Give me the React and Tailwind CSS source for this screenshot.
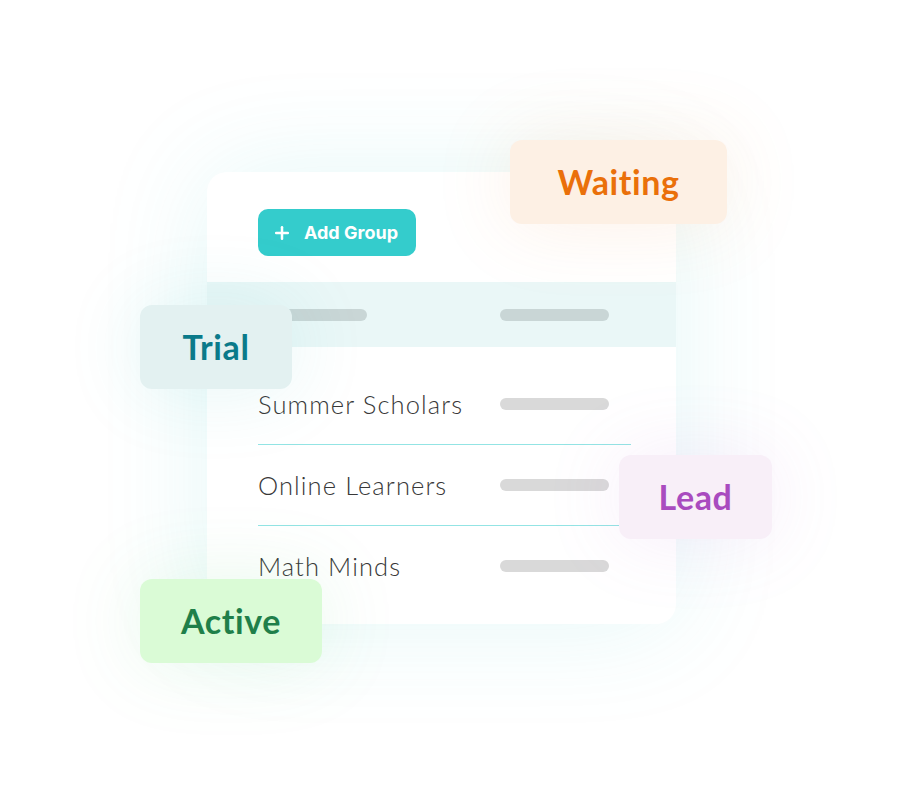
import { Plus } from 'lucide-react';

const rows = [
  ['Summer Scholars', true],
  ['Online Learners', true],
  ['Math Minds', false],
];

const badges = [
  ['Waiting', 'left-[510px] top-[140px] w-[217px] bg-[#fdf0e4] text-[#ea700a] shadow-[0_0_80px_rgba(240,140,60,0.13)]'],
  ['Trial', 'left-[140px] top-[305px] w-[152px] bg-[#e3f1f1] text-[#0a7a8a] shadow-[0_0_80px_rgba(40,180,180,0.12)]'],
  ['Lead', 'left-[619px] top-[455px] w-[153px] bg-[#f8eff8] text-[#a94bbf] shadow-[0_0_80px_rgba(190,110,210,0.12)]'],
  ['Active', 'left-[140px] top-[579px] w-[182px] bg-[#dafbd6] text-[#1f7f4a] shadow-[0_0_80px_rgba(80,200,110,0.13)]'],
];

export default function App() {
  return (
    <div className="relative h-[805px] w-[913px] overflow-hidden bg-white" style={{ fontFamily: 'Lato, "Open Sans", sans-serif' }}>
      <div className="pl-[207px] pt-[172px]">
        <div className="h-[452px] w-[469px] overflow-hidden rounded-[20px] bg-white shadow-[0_0_110px_rgba(52,204,204,0.13)]">
          <div className="h-[110px] pl-[51px] pt-[37px]">
            <button
              className="flex h-[47px] w-[158px] items-center gap-[12px] rounded-[10px] bg-[#34cccc] pl-[14px] text-[18px] font-bold text-white"
              style={{ fontFamily: 'Inter, sans-serif' }}
            >
              <Plus size={20} strokeWidth={3} />
              Add Group
            </button>
          </div>
          <div className="flex h-[65px] items-center bg-[#eaf7f7] pl-[52px]">
            <div className="h-[12px] w-[108px] rounded-full bg-[#c9d6d6]" />
            <div className="ml-[133px] h-[12px] w-[109px] rounded-full bg-[#c9d6d6]" />
          </div>
          <div className="pt-[17px]">
            {rows.map(([name, line]) => (
              <div key={name} className="ml-[51px] w-[373px]">
                <div className="flex h-[80px] items-center">
                  <span className="w-[242px] text-[25.5px] font-light tracking-[1.1px] text-[#383838]">{name}</span>
                  <div className="h-[12px] w-[109px] rounded-full bg-[#d9d9d9]" />
                </div>
                {line && <div className="h-px bg-[#93e4e4]" />}
              </div>
            ))}
          </div>
        </div>
      </div>
      {badges.map(([label, cls]) => (
        <div key={label} className={`absolute flex h-[84px] items-center justify-center rounded-[12px] pb-[2px] text-[34px] font-bold tracking-[0.6px] ${cls}`}>
          {label}
        </div>
      ))}
    </div>
  );
}
